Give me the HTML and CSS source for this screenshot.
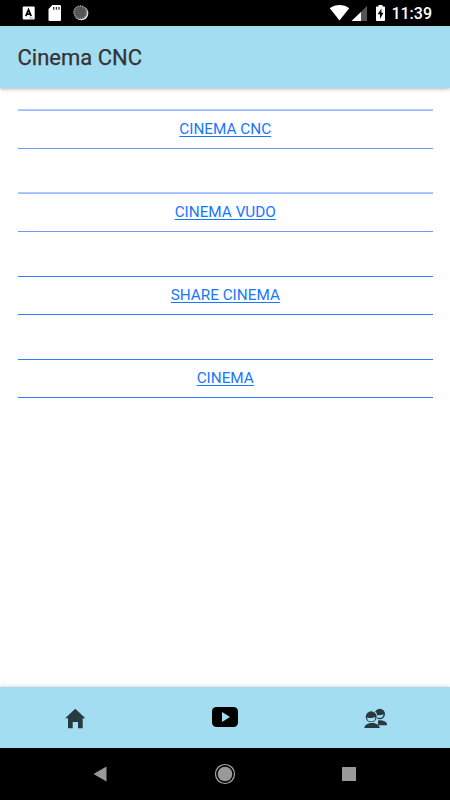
FILE: index.html
```html
<!DOCTYPE html>
<html lang="en">
<head>
    <meta charset="UTF-8">
    <meta name="viewport" content="width=device-width, initial-scale=1.0">
    <title>Cinema CNC</title>
    <link rel="stylesheet" href="styles.css">
</head>
<body>
    <div class="status-bar">
        <svg width="90" height="26" viewBox="0 0 90 26">
            <rect x="22.7" y="6.5" width="12" height="13" rx="1" fill="#fff"/>
            <path d="M25.8 16.2L28.5 9.7L31.2 16.2M26.8 14.2H30.2" fill="none" stroke="#000" stroke-width="1.7"/>
            <path d="M29.5 18h3.5" stroke="#999" stroke-width="1"/>
            <path d="M52.5 5H60a1 1 0 0 1 1 1V20a1 1 0 0 1-1 1H49.5a1 1 0 0 1-1-1V9z" fill="#fff"/>
            <path d="M53.7 7v2.8M56.4 7v2.8M59 7v2.8" stroke="#333" stroke-width="1.3"/>
            <circle cx="81.3" cy="13.3" r="7" fill="#eee"/>
            <circle cx="80.3" cy="12.3" r="6.9" fill="#555"/>
            <circle cx="80.3" cy="12.3" r="6.3" fill="none" stroke="#999" stroke-width="1.6" stroke-dasharray="1 1.2"/>
        </svg>
        <div class="status-right">
            <svg width="60" height="26" viewBox="0 0 60 26">
                <path d="M-.2 8.2C5.5 3.8 13.5 3.8 19.2 8.2L9.5 20.5z" fill="#fff"/>
                <path d="M37 6V21H21.5z" fill="#555"/>
                <path d="M31 12V21H21.5z" fill="#fff"/>
                <path d="M48.5 5h4v1.5h1.7a.8.8 0 0 1 .8.8v13a.8.8 0 0 1-.8.8h-7.400a.8.8 0 0 1-.8-.8v-13a.8.8 0 0 1 .8-.8h1.7z" fill="#fff"/>
                <path d="M51.5 8.5L47.7 14.3H50V19L53.4 12.8H51.3z" fill="#000"/>
            </svg>
            <span class="clock">11:39</span>
        </div>
    </div>

    <header class="toolbar">
        <h1>Cinema CNC</h1>
    </header>

    <main class="content">
        <a class="item soft" href="#">CINEMA CNC</a>
        <a class="item soft" href="#">CINEMA VUDO</a>
        <a class="item" href="#">SHARE CINEMA</a>
        <a class="item" href="#">CINEMA</a>
    </main>

    <nav class="tabs">
        <a class="tab" href="#">
            <svg width="22" height="21" viewBox="0 0 22 21">
                <path d="M11.3 .8L21.4 10.3H18.7V20.2H14V14H8.7V20.2H4V10.3H1.2z" fill="#28393f"/>
            </svg>
        </a>
        <a class="tab active" href="#">
            <svg width="26" height="20" viewBox="0 0 26 20">
                <rect width="26" height="20" rx="4.5" fill="#000"/>
                <path d="M10 5L18 10L10 15z" fill="#a3ddf1"/>
            </svg>
        </a>
        <a class="tab" href="#">
            <svg width="24" height="21" viewBox="0 0 24 21">
                <circle cx="16.8" cy="6" r="5.2" fill="#28393f"/>
                <path d="M13 6.8c3 1 5 .5 7.300-.5v1a3.700 3.200 0 0 1-7.300 0z" fill="#a3ddf1"/>
                <path d="M15 12.4c4.500-.8 9 .8 9.300 4.800H15z" fill="#28393f"/>
                <circle cx="8.2" cy="8.800" r="6.400" fill="#a3ddf1"/>
                <circle cx="8.2" cy="8.800" r="5.500" fill="#28393f"/>
                <path d="M4.200 9.600c3 .9 5.600.5 8-.5v.8a4 3.500 0 0 1-8 0z" fill="#a3ddf1"/>
                <path d="M.8 20.500C1 12.500 16.200 12.500 17.200 20.500z" fill="#a3ddf1"/>
                <path d="M1.300 19.900c.5-6.400 14.900-6.400 15.400 0z" fill="#28393f"/>
            </svg>
        </a>
    </nav>

    <div class="system-nav">
        <svg width="20" height="20" viewBox="0 0 20 20"><path d="M3.5 10L16.5 2.5V17.5z" fill="#999"/></svg>
        <svg width="22" height="22" viewBox="0 0 22 22">
            <circle cx="11" cy="11" r="9.5" fill="none" stroke="#aaa" stroke-width="1.2"/>
            <circle cx="11" cy="11" r="7.3" fill="#999"/>
        </svg>
        <svg width="20" height="20" viewBox="0 0 20 20"><rect x="3" y="3" width="14" height="14" rx=".5" fill="#999"/></svg>
    </div>
</body>
</html>
```

FILE: styles.css
```css
* {
    box-sizing: border-box;
}

body {
    margin: 0;
    height: 800px;
    display: flex;
    flex-direction: column;
    background: #fff;
    font-family: Roboto, sans-serif;
    overflow: hidden;
}

.status-bar {
    height: 26px;
    flex: none;
    display: flex;
    justify-content: space-between;
    background: #000;
    color: #fff;
}

.status-right {
    display: flex;
    align-items: center;
    padding-right: 18px;
}

.clock {
    width: 42px;
    font-size: 16px;
    font-weight: 500;
    line-height: 26px;
    padding-top: 2px;
    text-align: right;
}

.toolbar {
    height: 62px;
    flex: none;
    display: flex;
    align-items: center;
    padding-left: 17.5px;
    background: #a3ddf1;
    box-shadow: 0 1px 4px rgba(0, 0, 0, 0.3);
}

.toolbar h1 {
    margin: 0;
    color: #333;
    font-size: 22px;
    font-weight: 400;
    -webkit-text-stroke: 0.25px #333;
}

.content {
    flex: 1;
    display: flex;
    flex-direction: column;
    gap: 44.25px;
    padding: 21.5px 17px 0 17.5px;
}

.item {
    height: 39px;
    border-top: 1px solid #2f7dff;
    border-bottom: 1px solid #2f7dff;
    color: #1877ff;
    font-size: 15.3px;
    line-height: 37px;
    text-align: center;
    text-underline-offset: 2px;
}

/* lighter dividers on the first two rows */
.item.soft {
    border-top-color: #9dbcff;
    border-bottom-color: #6a9cff;
    box-shadow: 0 -1px 0 #b3caff;
}

.tabs {
    height: 61px;
    flex: none;
    display: grid;
    grid-template-columns: repeat(3, 1fr);
    background: #a3ddf1;
    box-shadow: 0 -1px 3px rgba(0, 0, 0, 0.15);
}

.tab {
    display: flex;
    justify-content: center;
    align-items: center;
    padding-top: 2px;
}

.tab.active {
    padding: 0 0 2px;
}

.system-nav {
    height: 52px;
    flex: none;
    display: flex;
    justify-content: space-between;
    align-items: center;
    padding: 0 91px 1px 90px;
    background: #000;
}
```
